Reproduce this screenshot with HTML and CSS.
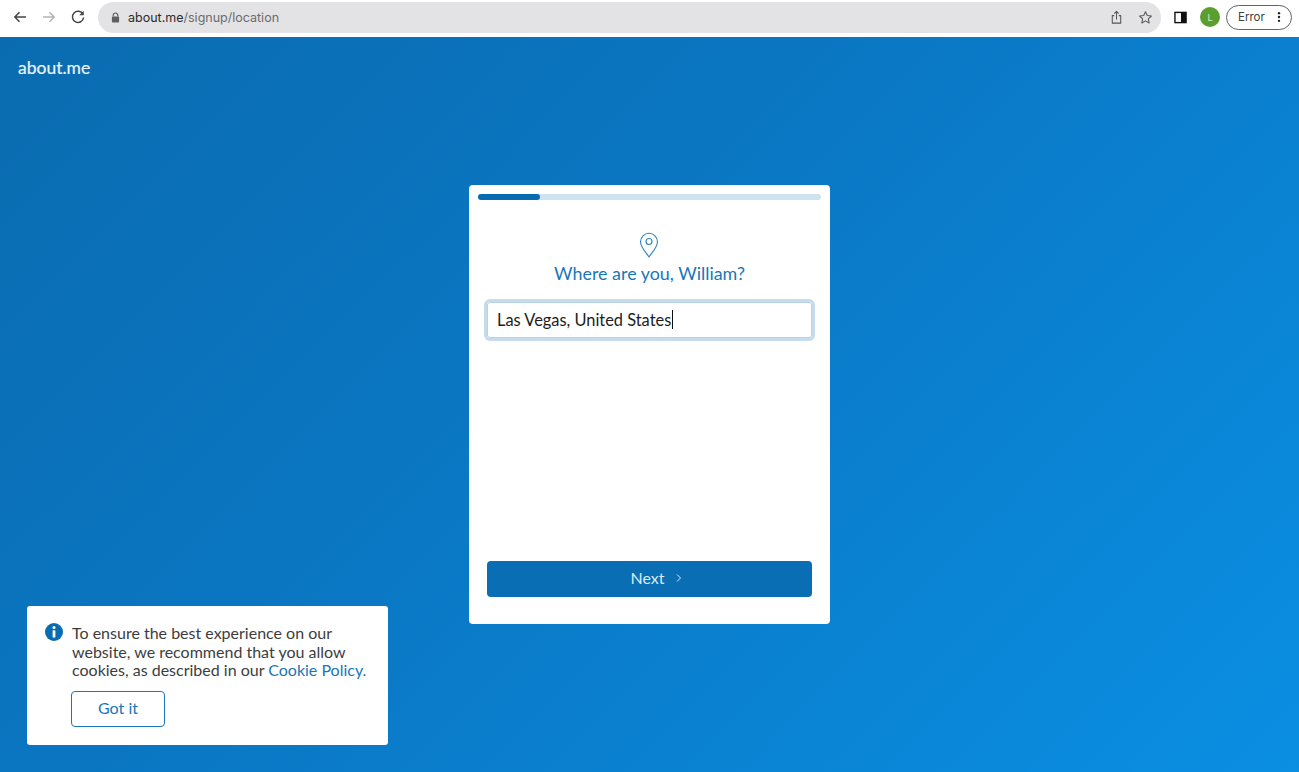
FILE: index.html
```html
<!DOCTYPE html>
<html lang="en">
<head>
<meta charset="utf-8">
<title>about.me</title>
<link rel="stylesheet" href="styles.css">
</head>
<body>
<header class="toolbar">
  <div class="nav">
    <svg class="tb-icon" viewBox="0 0 16 16"><path d="M14 8H3M7.500 3.200 2.800 8l4.700 4.800" class="st dark"/></svg>
    <svg class="tb-icon" viewBox="0 0 16 16"><path d="M2 8h11M8.500 3.200 13.200 8l-4.700 4.800" class="st faint"/></svg>
    <svg class="tb-icon" viewBox="0 0 16 16"><path d="M13 5.200A5.600 5.600 0 1 0 13.600 8.500" class="st dark"/><path d="M13.700 1.800v4.400H9.300z" class="fill-dark"/></svg>
  </div>
  <div class="omnibox">
    <svg class="lock" viewBox="0 0 10 12"><path d="M2.500 5V3.500a2.500 2.500 0 0 1 5 0V5" class="st lock-s"/><rect x="1" y="5" width="8" height="6.500" rx="1" class="fill-lock"/></svg>
    <span class="url"><span class="host">about.me</span>/signup/location</span>
    <span class="omni-actions">
      <svg class="om-icon" viewBox="0 0 16 16"><path d="M5.500 6H3.500v8h9V6h-2M8 10V1.500M5.600 3.800 8 1.500l2.400 2.300" class="st thin"/></svg>
      <svg class="om-icon" viewBox="0 0 16 16"><path d="m8 1.800 1.900 4.100 4.400.5-3.300 3 .9 4.400L8 11.600l-3.900 2.200.9-4.400-3.300-3 4.400-.5z" class="st thin"/></svg>
    </span>
  </div>
  <svg class="panel-icon" viewBox="0 0 14 14"><rect x="1" y="1.500" width="12" height="11" class="st panel-s"/><rect x="7.500" y="1.500" width="5.500" height="11" class="fill-black"/></svg>
  <span class="avatar">L</span>
  <span class="error-pill">Error<svg class="dots" viewBox="0 0 4 14"><circle cx="2" cy="2.500" r="1.400"/><circle cx="2" cy="7" r="1.400"/><circle cx="2" cy="11.500" r="1.400"/></svg></span>
</header>
<main class="page">
  <div class="logo">about.me</div>
  <div class="stage">
    <section class="card">
      <div class="progress"><div class="progress-fill"></div></div>
      <svg class="pin" viewBox="0 0 20 26"><path d="M10 24.800C6 19.500 1.500 15 1.500 9.800a8.500 8.500 0 0 1 17 0C18.500 15 14 19.500 10 24.800z" class="pin-s"/><circle cx="10" cy="9.500" r="3" class="pin-s"/></svg>
      <h1 class="title">Where are you, William?</h1>
      <div class="field"><span>Las Vegas, United States</span><i class="caret"></i></div>
      <button class="next"><span class="next-label">Next</span><svg class="chev" viewBox="0 0 8 10"><path d="M2 1.500 5.500 5 2 8.500"/></svg></button>
    </section>
  </div>
  <aside class="cookie">
    <div class="cookie-row">
      <svg class="info" viewBox="0 0 18 18"><circle cx="9" cy="9" r="9" class="info-bg"/><circle cx="9" cy="4.600" r="1.500" class="info-fg"/><rect x="7.600" y="7.200" width="2.800" height="7.300" rx=".5" class="info-fg"/></svg>
      <p class="cookie-text">To ensure the best experience on our website, we recommend that you allow cookies, as described in our <a class="cookie-link">Cookie Policy.</a></p>
    </div>
    <button class="got">Got it</button>
  </aside>
</main>
</body>
</html>
```
FILE: styles.css
```css
* { box-sizing: border-box; }
html, body { height: 100%; }
body {
  margin: 0;
  height: 772px;
  overflow: hidden;
  display: flex;
  flex-direction: column;
  font-family: "Lato", "Noto Sans", sans-serif;
  background: #fff;
}
.toolbar {
  height: 37px;
  flex: none;
  display: flex;
  align-items: center;
  background: #fff;
  padding: 0 7px 3px 12px;
  font-family: "Inter", "Liberation Sans", sans-serif;
}
.nav { display: flex; gap: 13px; align-items: center; }
.tb-icon { width: 16px; height: 16px; display: block; }
.st { fill: none; stroke-width: 1.500; }
.dark { stroke: #444; }
.faint { stroke: #b4b4b4; }
.fill-dark { fill: #444; }
.lock-s { stroke: #5f5f5f; stroke-width: 1.300; }
.fill-lock { fill: #5f5f5f; }
.thin { stroke: #555; stroke-width: 1.100; stroke-linejoin: round; }
.panel-s { stroke: #111; stroke-width: 1.500; }
.fill-black { fill: #111; }
.omnibox {
  margin-left: 12px;
  width: 1063px;
  height: 31px;
  border-radius: 16px;
  background: #e3e3e5;
  display: flex;
  align-items: center;
  padding: 0 8px 0 13px;
  font-size: 12.500px;
  color: #6b6b6b;
}
.lock { width: 9px; height: 11px; margin-right: 8px; }
.host { color: #2b2b2b; }
.omni-actions { margin-left: auto; display: flex; gap: 14px; }
.om-icon { width: 15px; height: 15px; display: block; }
.panel-icon { width: 13px; height: 13px; margin-left: 13px; }
.avatar {
  width: 20px;
  height: 20px;
  margin-left: 13px;
  border-radius: 50%;
  background: #5a9e2f;
  color: #d9eec9;
  font-size: 9px;
  display: flex;
  align-items: center;
  justify-content: center;
}
.error-pill {
  margin-left: 6px;
  width: 66px;
  height: 25px;
  border: 1px solid #5f6368;
  border-radius: 13px;
  display: flex;
  align-items: center;
  padding-left: 11px;
  font-size: 11.500px;
  color: #3c4043;
}
.dots { width: 4px; height: 12px; margin-left: 12px; fill: #222; }
.page {
  position: relative;
  flex: 1;
  display: flex;
  flex-direction: column;
  background: linear-gradient(135deg, #0a6cb0 0%, #0a76c2 40%, #0a8fe3 100%);
}
.logo {
  padding: 21px 0 0 18px;
  height: 60px;
  color: #eaf5fd;
  font-size: 17.500px;
  line-height: 20px;
  -webkit-text-stroke: 0.2px #eaf5fd;
}
.stage { display: flex; justify-content: center; padding-top: 88px; }
.card {
  width: 361px;
  height: 439px;
  background: #fff;
  border-radius: 4px;
  padding: 9px 9px 27px;
  display: flex;
  flex-direction: column;
  align-items: center;
}
.progress {
  width: 100%;
  height: 6px;
  flex: none;
  border-radius: 3px;
  background: #cfe2f0;
}
.progress-fill { width: 62px; height: 100%; border-radius: 3px; background: #0a6cb0; }
.pin { width: 20px; height: 26px; margin: 32px 1px 0 0; flex: none; }
.pin-s { fill: none; stroke: #2f82bd; stroke-width: 1.100; }
.title {
  margin: 3px 0 0;
  font-size: 17.900px;
  line-height: 24px;
  font-weight: 400;
  color: #1a76b8;
}
.field {
  width: 325px;
  height: 36px;
  margin-top: 17px;
  flex: none;
  display: flex;
  align-items: center;
  padding: 0 0 2px 9px;
  border: 1px solid #b9d2e4;
  border-radius: 3px;
  box-shadow: 0 0 0 3px #c6dbeb;
  font-size: 16.400px;
  color: #1c1c1c;
}
.caret { width: 1px; height: 19px; background: #111; margin-left: 1px; }
.next {
  width: 325px;
  height: 36px;
  margin-top: auto;
  flex: none;
  border: 0;
  border-radius: 4px;
  padding: 0 0 3px 14px;
  background: #0a6eb4;
  color: #d6ebfa;
  font: 400 16px "Lato", "Noto Sans", sans-serif;
  display: flex;
  align-items: center;
  justify-content: center;
  gap: 10px;
}
.chev { width: 8px; height: 10px; fill: none; stroke: #d6ebfa; stroke-width: 1; }
.cookie {
  position: absolute;
  left: 27px;
  top: 569px;
  width: 361px;
  height: 139px;
  background: #fff;
  border-radius: 3px;
  padding: 18px 18px 17px;
}
.cookie-row { display: flex; gap: 9px; }
.info { width: 18px; height: 18px; flex: none; margin-top: -1px; }
.info-bg { fill: #0a6cb0; }
.info-fg { fill: #fff; }
.cookie-text {
  margin: 0;
  font-size: 16px;
  line-height: 18.500px;
  color: #3d3d3d;
}
.cookie-link { color: #1a76b8; }
.got {
  display: block;
  margin: 11px 0 0 26px;
  width: 94px;
  height: 36px;
  border: 1.500px solid #1a76b8;
  border-radius: 4px;
  padding: 0 0 2px;
  background: #fff;
  color: #1a76b8;
  font: 400 16px "Lato", "Noto Sans", sans-serif;
}
```
